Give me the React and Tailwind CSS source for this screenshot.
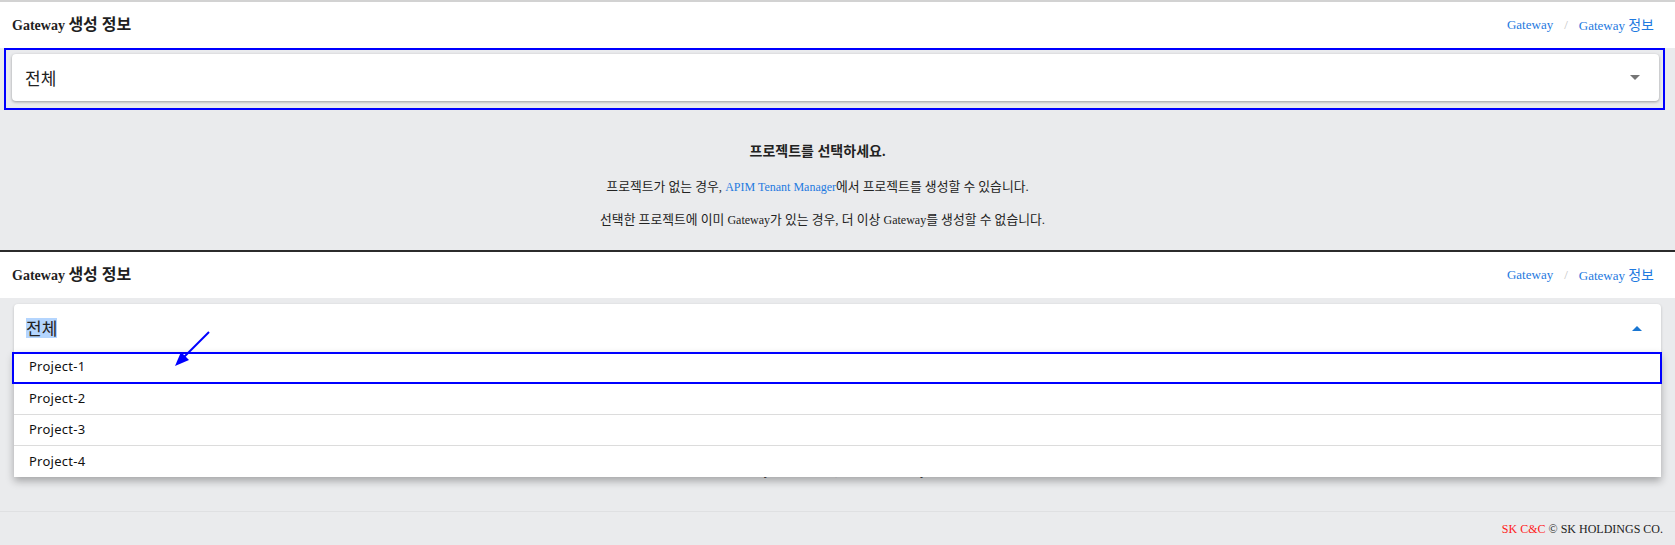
import React from 'react'

const serif = { fontFamily: '"Liberation Serif", "Noto Sans CJK KR", serif' }
const kr = { fontFamily: '"Noto Sans CJK KR", sans-serif' }

function Header() {
  return (
    <div className="flex h-[46px] items-center justify-between bg-white pl-[12px] pr-[21px]">
      <h2 className="text-[14px] font-bold text-[#1f1f1f]">
        Gateway <span className="text-[16px]">생성 정보</span>
      </h2>
      <nav className="flex items-center text-[13px] text-[#1f7ae0]">
        <span>Gateway</span>
        <span className="mx-[11px] text-[#c4c4c4]">/</span>
        <span>
          Gateway <span className="text-[14px]">정보</span>
        </span>
      </nav>
    </div>
  )
}

function Caret({ up }) {
  return (
    <svg width="10" height="5" viewBox="0 0 10 5">
      {up ? <path d="M0 5 L5 0 L10 5 Z" fill="#1976d2" /> : <path d="M0 0 L10 0 L5 5 Z" fill="#757575" />}
    </svg>
  )
}

function Message() {
  return (
    <div className="flex flex-col items-center pr-[40px] text-[#222]">
      <p className="text-[14px] font-bold leading-[20px]">프로젝트를 선택하세요.</p>
      <p className="mt-[16px] text-[12.8px] leading-[18px]">
        프로젝트가 없는 경우, <span className="text-[12px] text-[#1f7ae0]">APIM Tenant Manager</span>에서 프로젝트를 생성할 수 있습니다.
      </p>
      <p className="mt-[15px] pl-[10px] text-[12.8px] leading-[18px]">
        선택한 프로젝트에 이미 <span className="text-[12px]">Gateway</span>가 있는 경우, 더 이상 <span className="text-[12px]">Gateway</span>를 생성할 수 없습니다.
      </p>
    </div>
  )
}

const projects = ['Project-1', 'Project-2', 'Project-3', 'Project-4']
const rowH = ['h-[31px]', 'h-[32px]', 'h-[31px]', 'h-[31px]']

export default function App() {
  return (
    <div className="relative h-[545px] w-[1675px] overflow-hidden bg-[#eaebed]" style={serif}>
      {/* closed select */}
      <div className="h-[250px] border-t-2 border-[#d2d2d2]">
        <Header />
        <div className="ml-[4px] w-[1661px] border-2 border-[#0000ff] pb-[7px] pl-[6px] pr-[4px] pt-[4px]">
          <div className="flex h-[47px] items-center justify-between rounded-[4px] bg-white pl-[13px] pr-[19px] shadow-[0_1px_3px_rgba(0,0,0,0.35)]">
            <span className="text-[17px] text-[#222]" style={kr}>전체</span>
            <Caret />
          </div>
        </div>
        <div className="pt-[32px]">
          <Message />
        </div>
      </div>

      <div className="h-[2px] bg-[#2b2b2b]" />

      {/* open select */}
      <div className="flex h-[293px] flex-col">
        <Header />
        <div className="relative flex-1 px-[14px] pt-[6px]">
          <div className="relative">
            <div className="flex h-[48px] items-center justify-between rounded-t-[4px] bg-white pl-[12px] pr-[19px] shadow-[0_1px_3px_rgba(0,0,0,0.2)]">
              <span className="bg-[#b4d5fe] text-[17px] leading-[20px] text-[#222]" style={kr}>전체</span>
              <Caret up />
            </div>
            <ul className="absolute left-0 right-0 top-[48px] z-10 bg-white shadow-[0_4px_8px_rgba(0,0,0,0.3)]" style={{ fontFamily: '"Noto Sans", sans-serif' }}>
              {projects.map((p, i) => (
                <li key={p} className={`${rowH[i]} flex items-center border-b border-[#dcdcdc] pl-[15px] text-[13px] tracking-[0.25px] text-[#111] last:border-b-0`}>
                  {p}
                </li>
              ))}
            </ul>
          </div>
          <div className="pt-[41px]">
            <Message />
          </div>
        </div>
        <div className="flex h-[34px] items-center justify-end border-t border-[#dfe0e2] pr-[12px] text-[12px] text-[#222]">
          <span className="text-[#ff1a1a]">SK C&amp;C</span>
          <span>&nbsp;© SK HOLDINGS CO.</span>
        </div>
      </div>

      {/* annotation: highlighted option + arrow */}
      <div className="absolute left-[12px] top-[352px] z-20 h-[32px] w-[1650px] border-2 border-[#0000ff]" />
      <svg className="pointer-events-none absolute left-0 top-0 z-30" width="1675" height="545">
        <line x1="209" y1="332" x2="183" y2="358" stroke="#0000ff" strokeWidth="2" />
        <polygon points="175,366 189,360 181,352" fill="#0000ff" />
      </svg>
    </div>
  )
}
